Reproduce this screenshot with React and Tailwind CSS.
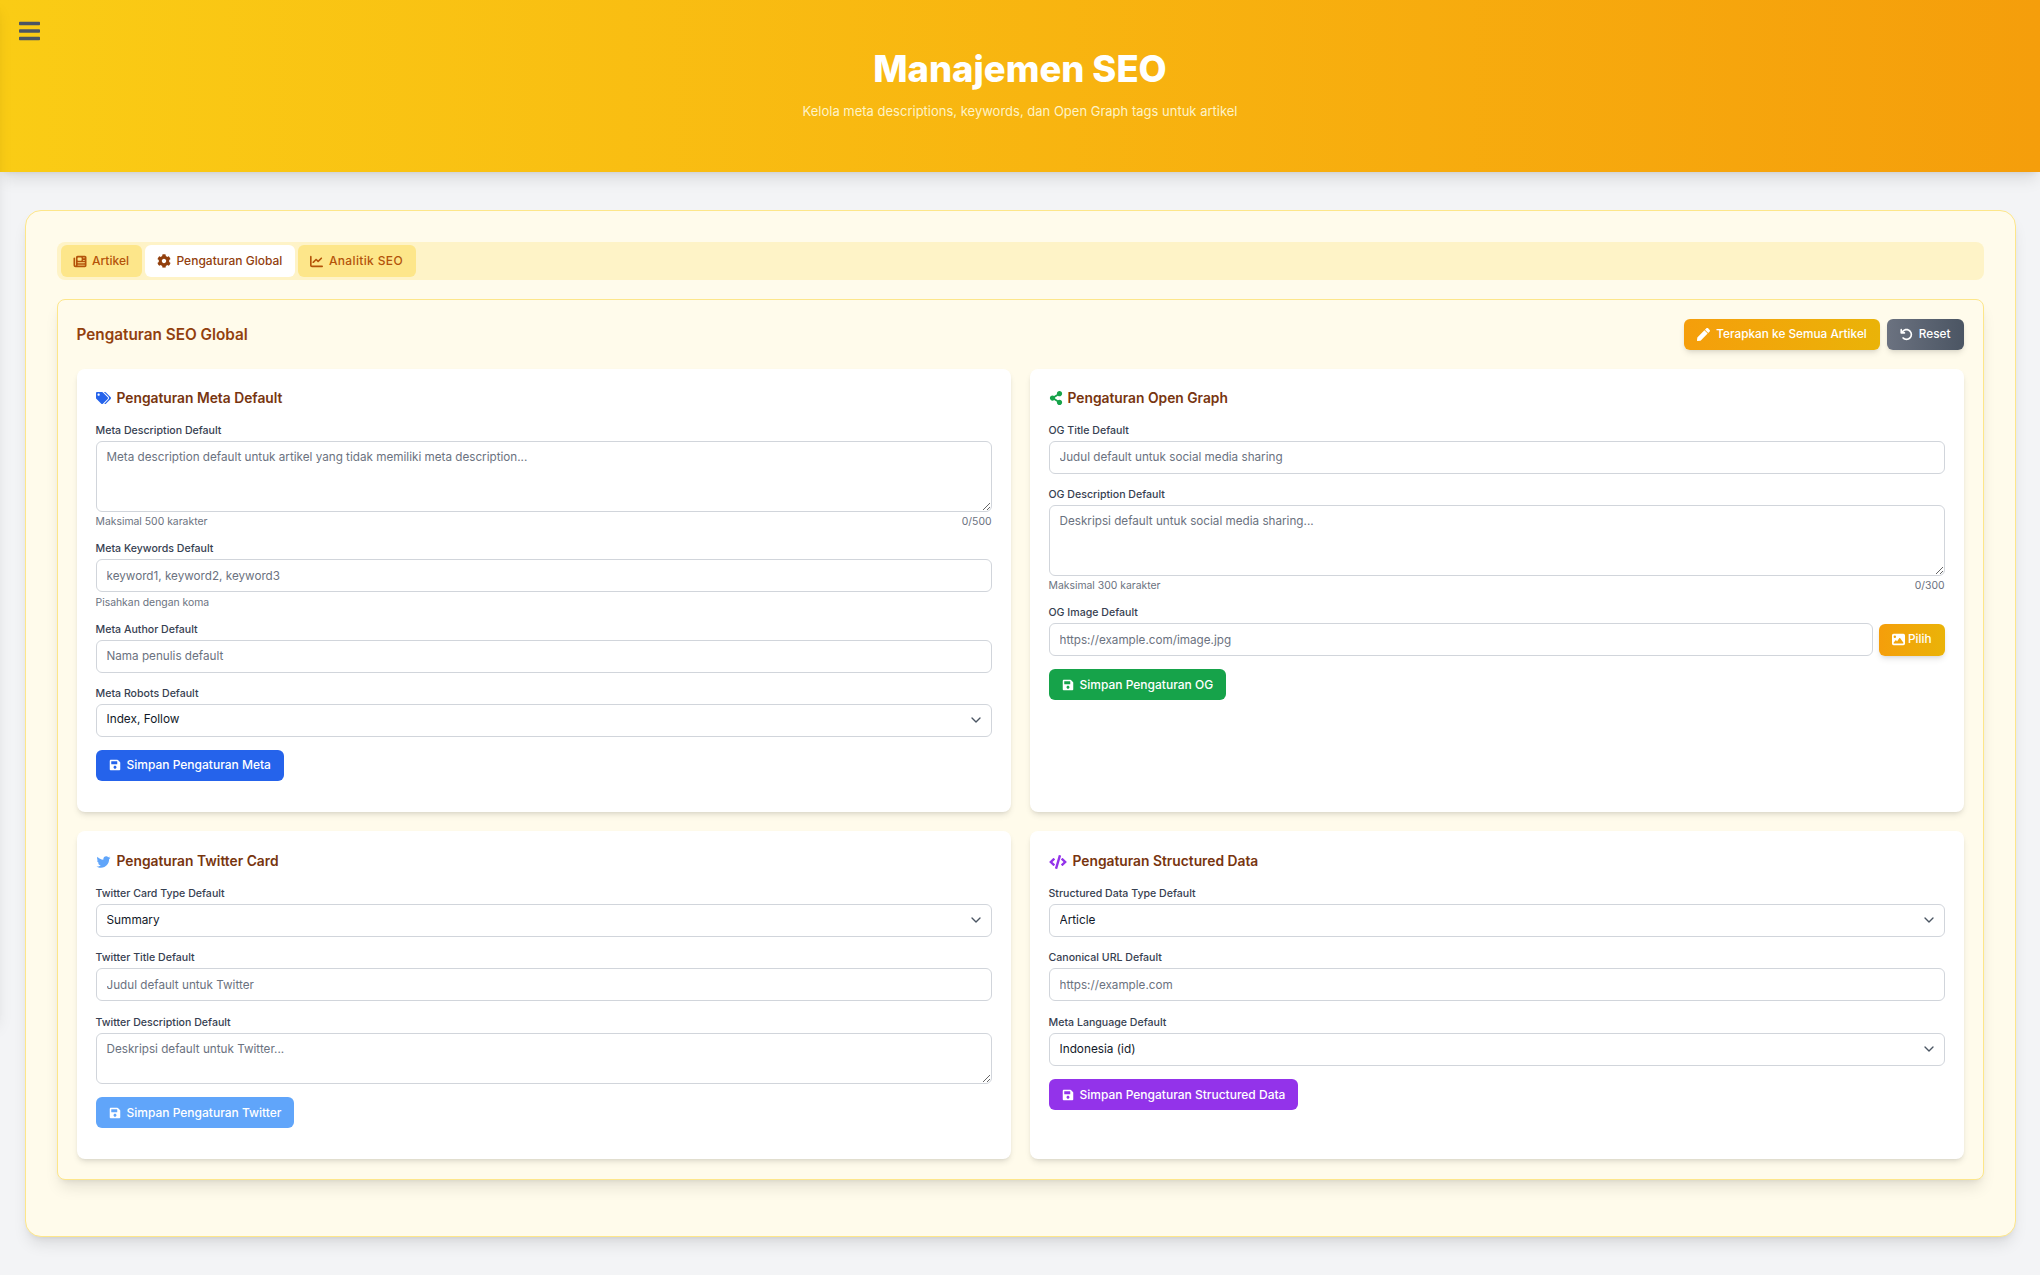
import { ChevronDown } from "lucide-react";
import {
  FaBars,
  FaCode,
  FaCog,
  FaPen,
  FaSave,
  FaShareAlt,
  FaTags,
  FaTwitter,
} from "react-icons/fa";
import { FaArrowRotateLeft, FaChartLine, FaImage, FaNewspaper } from "react-icons/fa6";

function Label({ children }) {
  return <label className="mb-[3px] block h-[14px] text-[10.6px] leading-[14px] font-medium text-[#374151]">{children}</label>;
}

function Hint({ left, right }) {
  return (
    <div className="mt-[3.5px] flex h-[14px] justify-between text-[10.4px] leading-[14px] text-[#6b7280]">
      <span>{left}</span>
      {right && <span>{right}</span>}
    </div>
  );
}

function Input({ placeholder }) {
  return (
    <input
      placeholder={placeholder}
      className="block h-[33px] w-full rounded-md border border-[#d1d5db] bg-white px-[10px] text-[11.7px] text-[#111827] outline-none placeholder:text-[#6b7280]"
    />
  );
}

function Textarea({ placeholder, height }) {
  return (
    <textarea
      placeholder={placeholder}
      className={`block w-full rounded-md border border-[#d1d5db] bg-white px-[10px] py-[6px] text-[11.7px] leading-[18px] text-[#111827] outline-none placeholder:text-[#6b7280] ${height}`}
    />
  );
}

function Select({ value }) {
  return (
    <div className="relative">
      <select
        defaultValue={value}
        className="block h-[33px] w-full appearance-none rounded-md border border-[#d1d5db] bg-white px-[10px] text-[11.8px] text-[#111827] outline-none"
      >
        <option>{value}</option>
      </select>
      <ChevronDown className="pointer-events-none absolute top-[8px] right-[8px] h-[16px] w-[16px] text-[#4b5563]" />
    </div>
  );
}

function SaveButton({ color, children }) {
  return (
    <button className={`flex h-[31px] items-center gap-[6px] rounded-md px-[13px] text-[12px] font-medium text-white ${color}`}>
      <FaSave className="h-[12px] w-[12px]" />
      {children}
    </button>
  );
}

function Card({ icon, title, pad, children }) {
  return (
    <div className={`rounded-lg bg-white px-[19px] shadow-md ${pad}`}>
      <h3 className="mb-[15.5px] flex h-[20px] items-center gap-[6px] text-[13.8px] font-semibold text-[#78350f]">
        {icon}
        {title}
      </h3>
      {children}
    </div>
  );
}

function Tab({ icon, active, children }) {
  return (
    <button
      className={`flex h-[32px] items-center gap-[5.5px] rounded-md pr-[13px] pl-[12px] text-[12px] font-medium ${
        active ? "bg-white text-[#92400e]" : "bg-[#fde68a] text-[#b45309]"
      }`}
    >
      {icon}
      {children}
    </button>
  );
}

export default function App() {
  return (
    <div className="relative min-h-[1275px] overflow-hidden bg-[#f3f4f6] font-['Inter',sans-serif]">
      <header className="relative h-[172px] bg-gradient-to-r from-[#facc15] to-[#f59e0b] pt-[49px] text-center shadow-lg">
        <button className="absolute top-[19px] left-[19px] text-[#4b5563]">
          <FaBars className="h-[24px] w-[21px]" />
        </button>
        <h1 className="text-[36.4px] leading-[40px] font-extrabold text-white">Manajemen SEO</h1>
        <p className="mt-[12px] text-[13px] leading-[20px] text-[#fef3c7]">
          Kelola meta descriptions, keywords, dan Open Graph tags untuk artikel
        </p>
      </header>

      {/* closed sidebar, only its shadow shows at the left edge */}
      <div className="pointer-events-none absolute top-0 left-[-260px] h-[1020px] w-[260px] shadow-lg" />

      <main className="mx-[24.5px] mt-[38px] rounded-2xl border border-[#fde68a] bg-[#fffbeb] px-[31px] pt-[31px] pb-[56px] shadow-lg">
        <div className="mb-[19px] flex h-[38px] items-center gap-[3px] rounded-lg bg-[#fef3c7] px-[4px]">
          <Tab icon={<FaNewspaper className="h-[13px] w-[14px]" />}>Artikel</Tab>
          <Tab active icon={<FaCog className="h-[14px] w-[14px]" />}>Pengaturan Global</Tab>
          <Tab icon={<FaChartLine className="h-[13px] w-[13px]" />}>
            <span className="tracking-[0.03em]">Analitik SEO</span>
          </Tab>
        </div>

        <section className="rounded-lg border border-[#fde68a] bg-[#fffbeb] px-[19px] pt-[19px] pb-[20px] shadow-lg">
          <div className="mb-[19px] flex h-[31px] items-center justify-between">
            <h2 className="pt-[1px] text-[15.3px] font-semibold text-[#92400e]">Pengaturan SEO Global</h2>
            <div className="flex gap-[7px]">
              <button className="flex h-[31px] items-center gap-[6px] rounded-md bg-gradient-to-r from-[#f59e0b] to-[#eab308] px-[13px] text-[11.8px] font-medium text-white shadow-md">
                <FaPen className="h-[13px] w-[13px]" />
                Terapkan ke Semua Artikel
              </button>
              <button className="flex h-[31px] items-center gap-[6px] rounded-md bg-gradient-to-r from-[#6b7280] to-[#4b5563] px-[13px] text-[11.8px] font-medium text-white shadow-md">
                <FaArrowRotateLeft className="h-[13px] w-[13px]" />
                Reset
              </button>
            </div>
          </div>

          <div className="grid grid-cols-2 gap-[19px]">
            <Card pad="pt-[19px] pb-[31px]" icon={<FaTags className="h-[14px] w-[15px] text-[#2563eb]" />} title="Pengaturan Meta Default">
              <div className="mb-[13px]">
                <Label>Meta Description Default</Label>
                <Textarea height="h-[71px]" placeholder="Meta description default untuk artikel yang tidak memiliki meta description..." />
                <Hint left="Maksimal 500 karakter" right="0/500" />
              </div>
              <div className="mb-[13px]">
                <Label>Meta Keywords Default</Label>
                <Input placeholder="keyword1, keyword2, keyword3" />
                <Hint left="Pisahkan dengan koma" />
              </div>
              <div className="mb-[14px]">
                <Label>Meta Author Default</Label>
                <Input placeholder="Nama penulis default" />
              </div>
              <div className="mb-[13px]">
                <Label>Meta Robots Default</Label>
                <Select value="Index, Follow" />
              </div>
              <SaveButton color="bg-[#2563eb]">Simpan Pengaturan Meta</SaveButton>
            </Card>

            <Card pad="pt-[19px] pb-[31px]" icon={<FaShareAlt className="-mr-px h-[14px] w-[14px] text-[#16a34a]" />} title="Pengaturan Open Graph">
              <div className="mb-[14px]">
                <Label>OG Title Default</Label>
                <Input placeholder="Judul default untuk social media sharing" />
              </div>
              <div className="mb-[13px]">
                <Label>OG Description Default</Label>
                <Textarea height="h-[71px]" placeholder="Deskripsi default untuk social media sharing..." />
                <Hint left="Maksimal 300 karakter" right="0/300" />
              </div>
              <div className="mb-[13px]">
                <Label>OG Image Default</Label>
                <div className="flex items-center gap-[6px]">
                  <Input placeholder="https://example.com/image.jpg" />
                  <button className="flex h-[32px] shrink-0 items-center gap-[3px] rounded-md bg-gradient-to-r from-[#f59e0b] to-[#eab308] px-[13px] text-[11.8px] font-medium text-white shadow-md">
                    <FaImage className="h-[13px] w-[13px]" />
                    Pilih
                  </button>
                </div>
              </div>
              <SaveButton color="bg-[#16a34a]">Simpan Pengaturan OG</SaveButton>
            </Card>

            <Card pad="pt-[21px] pb-[31px]" icon={<FaTwitter className="h-[14px] w-[15px] text-[#60a5fa]" />} title="Pengaturan Twitter Card">
              <div className="mb-[14px]">
                <Label>Twitter Card Type Default</Label>
                <Select value="Summary" />
              </div>
              <div className="mb-[15px]">
                <Label>Twitter Title Default</Label>
                <Input placeholder="Judul default untuk Twitter" />
              </div>
              <div className="mb-[13px]">
                <Label>Twitter Description Default</Label>
                <Textarea height="h-[51px]" placeholder="Deskripsi default untuk Twitter..." />
              </div>
              <SaveButton color="bg-[#60a5fa]">Simpan Pengaturan Twitter</SaveButton>
            </Card>

            <Card pad="pt-[21px] pb-[31px]" icon={<FaCode className="h-[14px] w-[18px] text-[#9333ea]" />} title="Pengaturan Structured Data">
              <div className="mb-[14px]">
                <Label>Structured Data Type Default</Label>
                <Select value="Article" />
              </div>
              <div className="mb-[15px]">
                <Label>Canonical URL Default</Label>
                <Input placeholder="https://example.com" />
              </div>
              <div className="mb-[13px]">
                <Label>Meta Language Default</Label>
                <Select value="Indonesia (id)" />
              </div>
              <SaveButton color="bg-[#9333ea]">Simpan Pengaturan Structured Data</SaveButton>
            </Card>
          </div>
        </section>
      </main>
    </div>
  );
}
